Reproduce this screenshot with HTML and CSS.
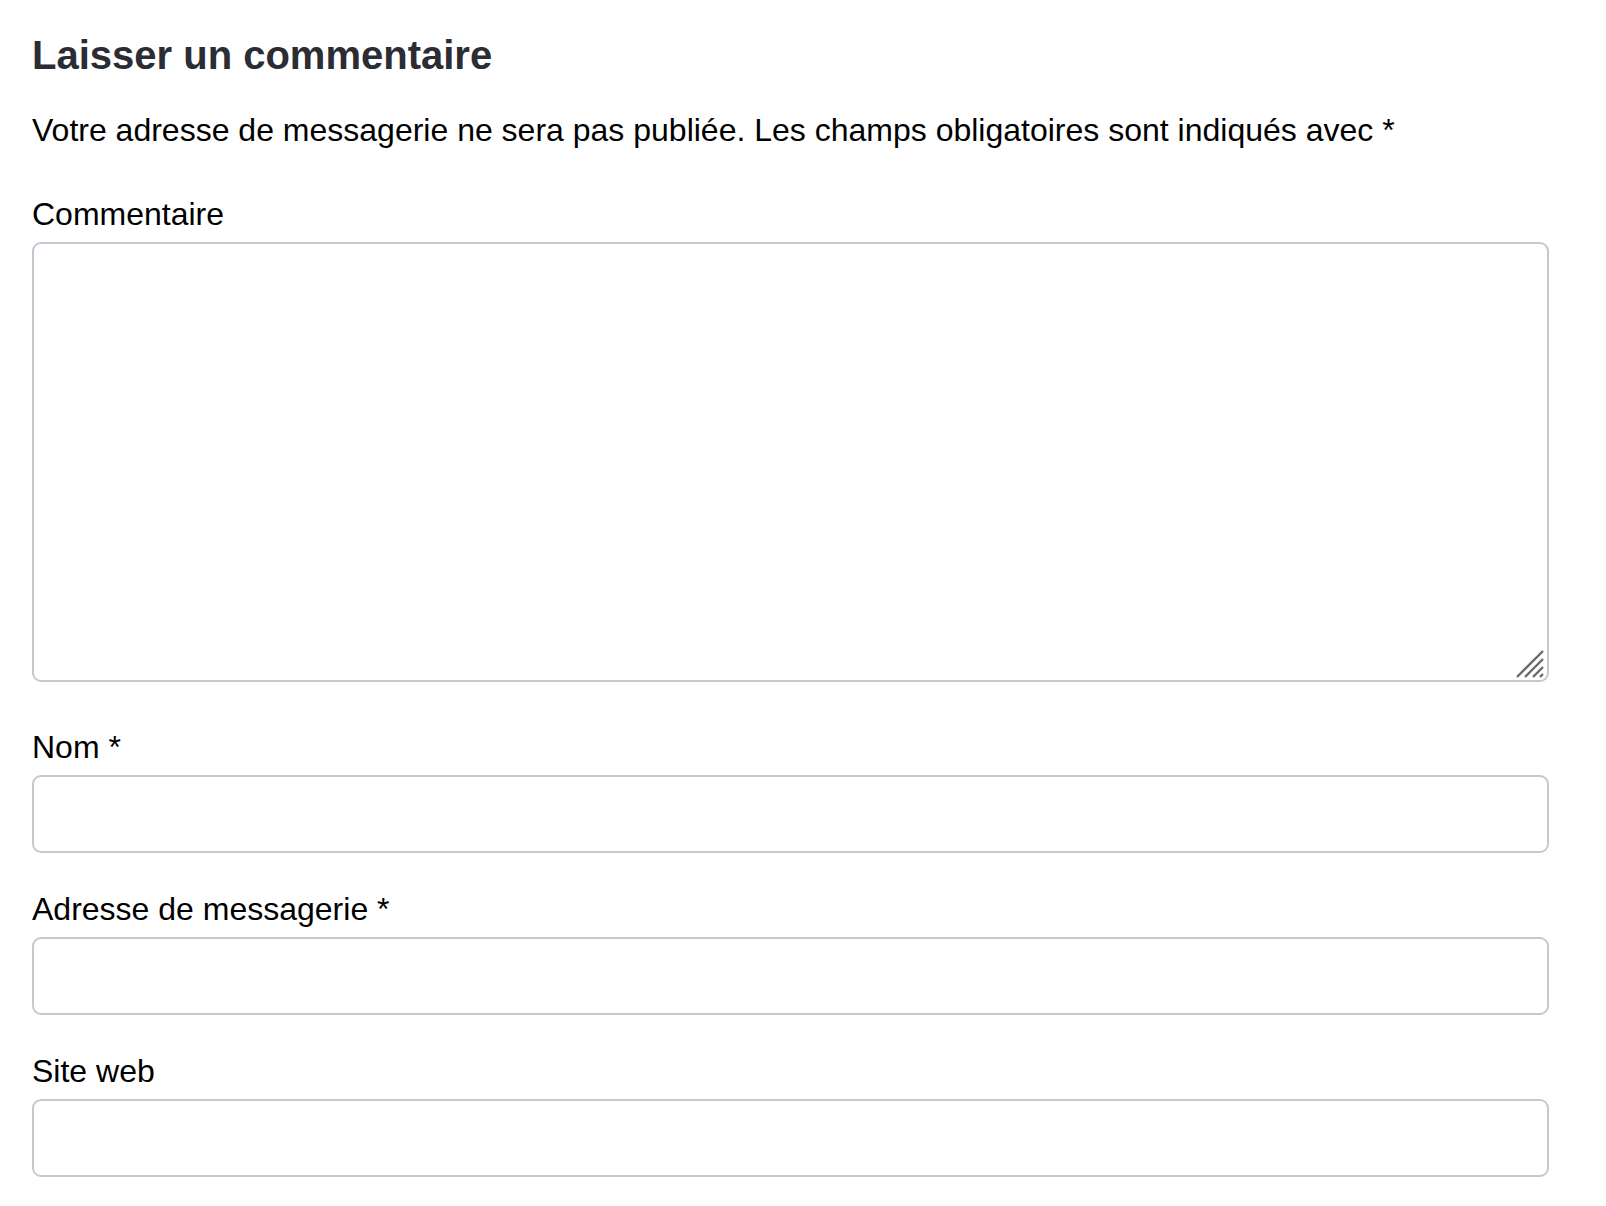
FILE: index.html
```html
<!DOCTYPE html>
<html lang="fr">
<head>
<meta charset="utf-8">
<title>Laisser un commentaire</title>
<link rel="stylesheet" href="styles.css">
</head>
<body>
<section class="respond">
  <h3 class="title">Laisser un commentaire</h3>
  <form class="form">
    <p class="notes">Votre adresse de messagerie ne sera pas publiée. Les champs obligatoires sont indiqués avec <span class="req">*</span></p>
    <div class="field field-comment">
      <label class="label" for="comment">Commentaire</label>
      <div class="ta-wrap">
        <textarea id="comment" class="textarea"></textarea>
        <svg class="grip" width="28" height="28" viewBox="0 0 28 28" aria-hidden="true">
          <line x1="1" y1="27" x2="27" y2="1" stroke="#6b6b6b" stroke-width="2.4"/>
          <line x1="9" y1="27" x2="27" y2="9" stroke="#6b6b6b" stroke-width="2.4"/>
          <line x1="17" y1="27" x2="27" y2="17" stroke="#6b6b6b" stroke-width="2.4"/>
          <line x1="24" y1="27" x2="27" y2="24" stroke="#6b6b6b" stroke-width="2.4"/>
        </svg>
      </div>
    </div>
    <div class="field">
      <label class="label" for="author">Nom <span class="req">*</span></label>
      <input id="author" class="input" type="text">
    </div>
    <div class="field">
      <label class="label" for="email">Adresse de messagerie <span class="req">*</span></label>
      <input id="email" class="input" type="email">
    </div>
    <div class="field">
      <label class="label" for="url">Site web</label>
      <input id="url" class="input" type="url">
    </div>
  </form>
</section>
</body>
</html>
```
FILE: styles.css
```css
html, body {
  margin: 0;
  padding: 0;
  background: #ffffff;
}
body {
  font-family: "Liberation Sans", Arial, Helvetica, sans-serif;
  color: #000000;
}
.respond {
  width: 1517px;
  margin-left: 32px;
  padding-top: 31px;
}
.title {
  margin: 0;
  font-size: 40px;
  line-height: 48px;
  font-weight: 700;
  color: #2b2c34;
}
.form {
  display: flex;
  flex-direction: column;
}
.notes {
  margin: 31px 0 44px;
  font-size: 32px;
  line-height: 40px;
}
.req {
  color: #000;
}
.field {
  display: flex;
  flex-direction: column;
  margin-bottom: 36px;
}
.field-comment {
  margin-bottom: 45px;
}
.label {
  display: block;
  font-size: 32px;
  line-height: 40px;
  margin-bottom: 8px;
}
.ta-wrap {
  position: relative;
}
.textarea,
.input {
  box-sizing: border-box;
  display: block;
  width: 100%;
  margin: 0;
  border: 2px solid #c8c7d1;
  border-radius: 9px;
  background: #fff;
  font-family: inherit;
  font-size: 32px;
  outline: none;
}
.textarea {
  height: 440px;
  resize: none;
}
.input {
  height: 78px;
}
.grip {
  position: absolute;
  right: 5px;
  bottom: 4px;
}
```
